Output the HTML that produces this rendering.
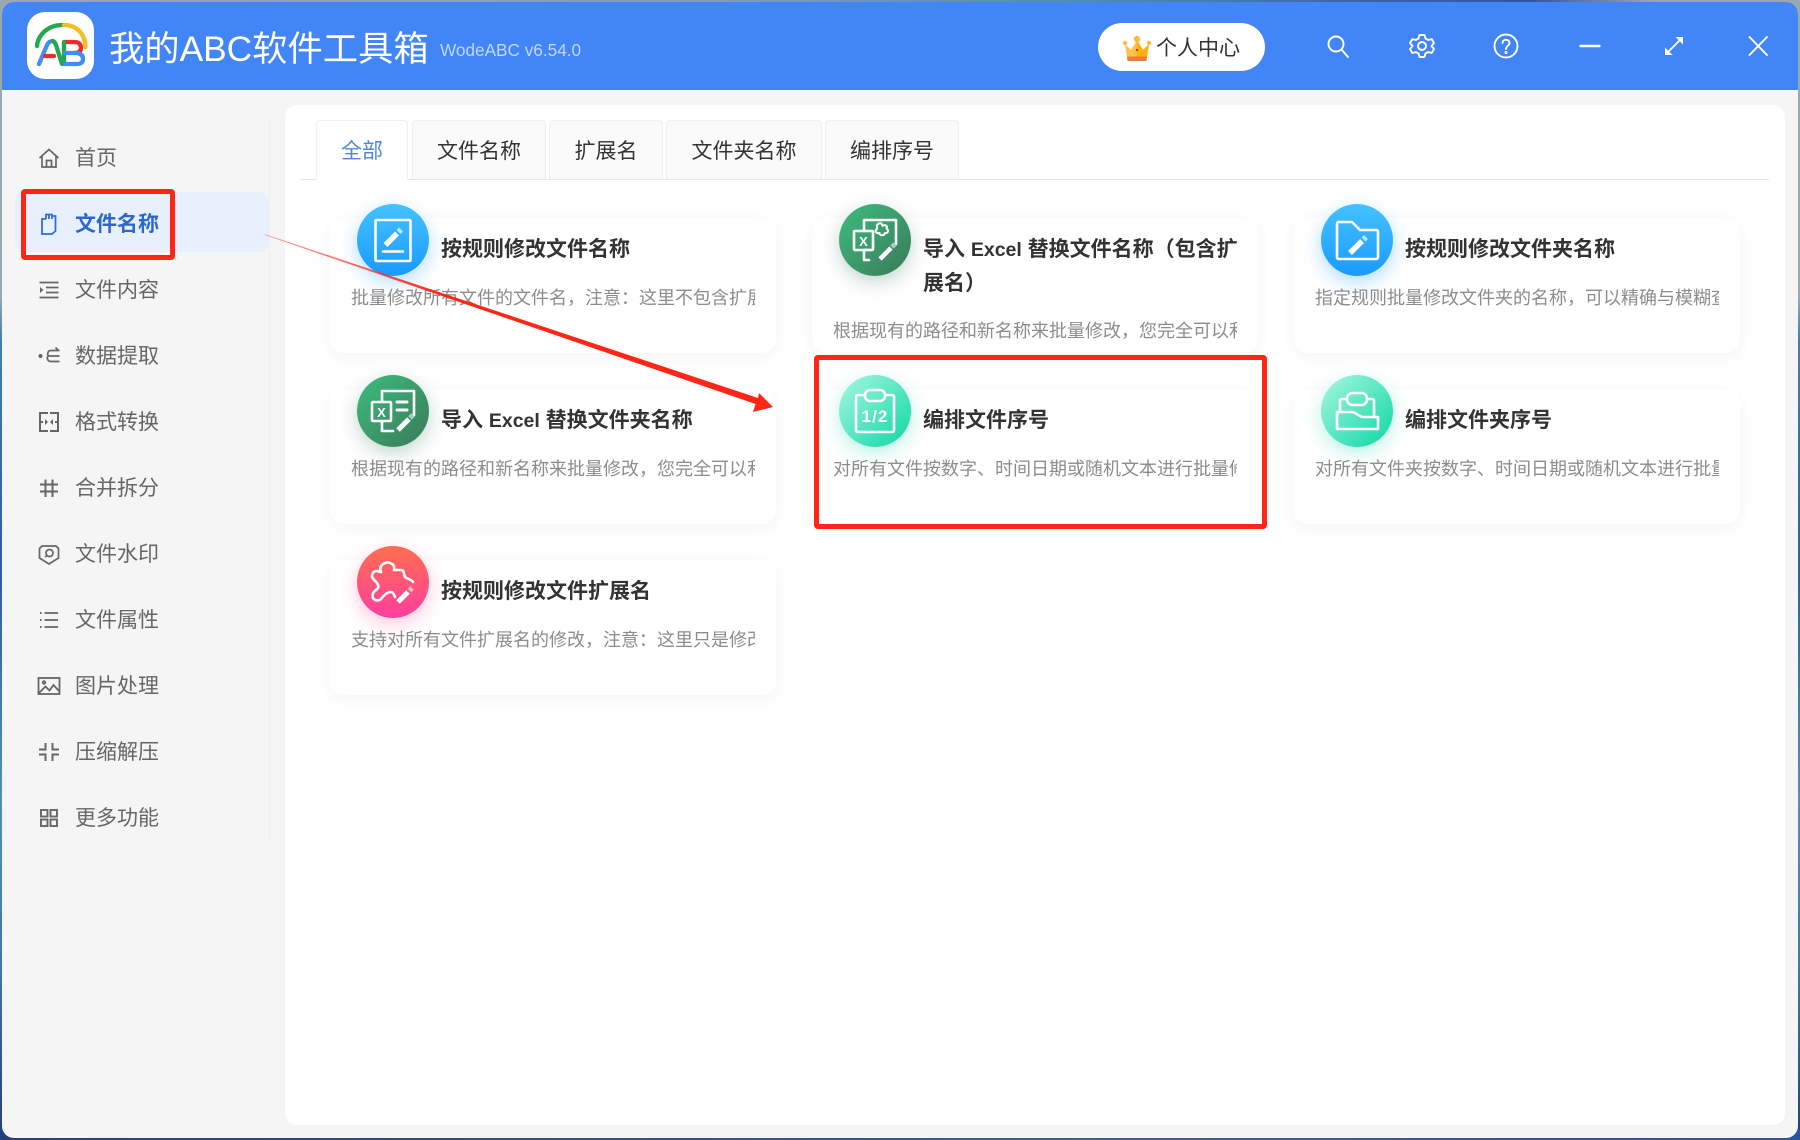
<!DOCTYPE html>
<html lang="zh-CN">
<head>
<meta charset="utf-8">
<title>我的ABC软件工具箱</title>
<style>
*{box-sizing:border-box;margin:0;padding:0}
html,body{width:1800px;height:1140px;overflow:hidden}
body{position:relative;background:linear-gradient(180deg,#9aa7b0 0,#9aa7b0 26%,#3d7fb5 30%,#2c5fa8 50%,#4d92b8 70%,#3d78b0 85%,#24407c 100%);font-family:"Liberation Sans","Noto Sans CJK SC",sans-serif}
.topbg{position:absolute;left:0;top:0;width:1800px;height:4px;background:linear-gradient(90deg,#9aa7b0 0,#7f9fb0 40%,#4d8fb0 60%,#3a66b0 75%,#2f55a8 85%,#9aa7b0 92%)}
.botbg{position:absolute;left:0;top:1130px;width:1800px;height:10px;background:linear-gradient(90deg,#24407c 0,#3a5f90 60%,#2a55a0 100%)}
#win{position:absolute;left:2px;top:2px;width:1796px;height:1136px;background:#f5f5f5;border-radius:12px;overflow:hidden}
#hd{position:absolute;left:0;top:0;width:1796px;height:88px;background:#4285f7}
.a{position:absolute;white-space:nowrap}
.abs{position:absolute}
#panel{position:absolute;left:285px;top:105px;width:1500px;height:1020px;background:#fff;border-radius:12px}
#divider{position:absolute;left:269px;top:120px;width:1px;height:725px;background:#efefef}
#act{position:absolute;left:15px;top:192px;width:254px;height:60px;background:#e8f0fd;border-radius:10px}
.nav{position:absolute;left:75px;font-size:21px;line-height:30px;color:#666;white-space:nowrap}
.ni{position:absolute;left:37px;width:24px;height:24px;fill:none;stroke:#666;stroke-width:1.7}
.tab{position:absolute;top:120px;height:59px;background:#fafafa;border:1px solid #f0f0f0;border-bottom:none;border-radius:4px 4px 0 0;font-size:21px;line-height:62px;text-align:center;color:#333}
.card{position:absolute;width:446px;height:135px;background:#fff;border-radius:14px;box-shadow:0 4px 18px rgba(0,0,0,.045)}
.circ{position:absolute;width:72px;height:72px;border-radius:50%}
.circ svg{position:absolute;left:0;top:0;width:72px;height:72px;fill:none;stroke:#fff;stroke-width:2.6;stroke-linecap:round;stroke-linejoin:round}
.ttl{position:absolute;font-size:21px;font-weight:700;line-height:33px;color:#333;white-space:nowrap}
.ttl span{font-size:19.500px}
.dsc{position:absolute;width:404px;height:28px;overflow:hidden;font-size:18px;line-height:28px;color:#8c8c8c;white-space:nowrap}
.blue{background:linear-gradient(180deg,#45c2ff,#1a9aff);box-shadow:0 6px 18px rgba(30,155,255,.35)}
.green{background:linear-gradient(135deg,#3cbd7d,#3b7a5a);box-shadow:0 6px 18px rgba(50,120,90,.3)}
.teal{background:linear-gradient(135deg,#a8f7e2,#0cd7a3);box-shadow:0 6px 18px rgba(20,215,165,.3)}
.pink{background:linear-gradient(180deg,#ff6e4e,#ff3ea0);box-shadow:0 6px 18px rgba(255,70,140,.3)}
.hi{position:absolute;top:32px;width:28px;height:28px;fill:none;stroke:#fff;stroke-width:1.9;stroke-linecap:round;stroke-linejoin:round}
.rb{position:absolute;border:5px solid #ff2618;border-radius:4px}
</style>
</head>
<body>
<div class="topbg"></div>
<div class="botbg"></div>
<div id="win">
  <div id="hd"></div>
</div>

<!-- logo -->
<svg class="abs" style="left:27px;top:12px" width="67" height="67" viewBox="0 0 67 67" fill="none" stroke-width="4.300" stroke-linecap="round">
  <rect width="67" height="67" rx="18" fill="#fff" stroke="none"/>
  <path d="M10 34C11 22 22 13 35 13" stroke="#22a84f"/>
  <path d="M37 13C50 13 58 22 58.500 35" stroke="#f5bd1d"/>
  <path d="M12 52L20 33Q22 29 26 29" stroke="#3f8ef0"/>
  <path d="M26 29Q28 30 29 33L35 52" stroke="#22a84f"/>
  <path d="M18 44H27" stroke="#ee2a2a"/>
  <path d="M38 30H47Q54 30 54 36Q54 41 47 41" stroke="#ee2a2a"/>
  <path d="M37 30V52" stroke="#22a84f"/>
  <path d="M38 41H50Q56 42 56 47Q56 52 50 52H38" stroke="#3f8ef0"/>
</svg>
<div class="a" style="left:109px;top:27px;font-size:35.300px;line-height:46px;color:#fff">我的ABC软件工具箱</div>
<div class="a" style="left:440px;top:37px;font-size:17.200px;line-height:26px;color:#c3d7fb">WodeABC v6.54.0</div>

<!-- user button -->
<div class="abs" style="left:1098px;top:23px;width:167px;height:48px;border-radius:24px;background:#fff"></div>
<svg class="abs" style="left:1122px;top:34px" width="30" height="28" viewBox="0 0 30 28">
  <path d="M3 10L9 16L15 6L21 16L27 10L25 23H5Z" fill="#ffc24a"/>
  <path d="M15 6L21 16L27 10L25 23H15Z" fill="#ffb000"/>
  <circle cx="15" cy="5" r="3.200" fill="#fdbb46"/><circle cx="3" cy="9" r="2.200" fill="#fdbb46"/><circle cx="27" cy="9" r="2.200" fill="#fdbb46"/>
  <path d="M5 22.500H25L24.500 27H5.500Z" fill="#ee7b3a"/>
  <circle cx="15" cy="16" r="1.200" fill="#d4382c"/>
</svg>
<div class="a" style="left:1156px;top:34px;font-size:21px;line-height:30px;color:#333">个人中心</div>

<!-- window icons -->
<svg class="hi" style="left:1324px" viewBox="0 0 28 28"><circle cx="12" cy="12" r="7.500"/><path d="M17.500 17.500L24 25"/></svg>
<svg class="hi" style="left:1408px" viewBox="0 0 28 28"><path d="M11.500 3H16.500L17.500 6.500L20.200 8L23.700 7.100L26 11L23.500 14L26 17L23.700 21L20.200 20L17.500 21.500L16.500 25H11.500L10.500 21.500L7.800 20L4.300 21L2 17L4.500 14L2 11L4.300 7.100L7.800 8L10.500 6.500Z"/><circle cx="14" cy="14" r="4"/></svg>
<svg class="hi" style="left:1492px" viewBox="0 0 28 28"><circle cx="14" cy="14" r="11.500"/><path d="M10.500 11C10.500 6.800 17.500 6.800 17.500 11C17.500 13.800 14 13.800 14 17"/><circle cx="14" cy="20.500" r=".6"/></svg>
<svg class="hi" style="left:1576px" viewBox="0 0 28 28"><path d="M4.500 14H23.500" stroke-width="2.400"/></svg>
<svg class="hi" style="left:1660px" viewBox="0 0 28 28"><path d="M8 20L20 8"/><path d="M15.500 5H23V12.500L15.500 5Z" fill="#fff" stroke="none"/><path d="M12.500 23H5V15.500L12.500 23Z" fill="#fff" stroke="none"/></svg>
<svg class="hi" style="left:1744px" viewBox="0 0 28 28"><path d="M5.500 5L23 23M23 5L5.500 23"/></svg>

<!-- sidebar -->
<div id="divider"></div>
<div id="act"></div>

<svg class="ni" style="top:146px" viewBox="0 0 24 24"><path d="M2.500 12L12 3.500L21.500 12M5 10V21H19V10M9.500 21V14.500H14.500V21"/></svg>
<div class="nav" style="top:144px">首页</div>

<svg class="ni" style="top:212px;stroke:#2f6fd6;stroke-width:1.8" viewBox="0 0 24 24"><path d="M9 7H5V22H15L18.500 19V4H16"/><path d="M9 7V2.500H15V7"/><path d="M12 7V2.500"/></svg>
<div class="nav" style="top:210px;color:#2c67cd;font-weight:700">文件名称</div>

<svg class="ni" style="top:278px" viewBox="0 0 24 24"><path d="M2.500 4.500H21.500M9 9.500H21.500M9 14.500H21.500M2.500 19.500H21.500"/><path d="M3 9L6.500 12L3 15Z" fill="#666" stroke="none"/></svg>
<div class="nav" style="top:276px">文件内容</div>

<svg class="ni" style="top:344px" viewBox="0 0 24 24"><circle cx="3.500" cy="12" r="2" fill="#666" stroke="none"/><path d="M12 12H22.500M22.500 6.500H14C10 6.500 10 12 12 12C9 12 10 17.500 14 17.500H22.500M18.500 3.500L21.500 6.500"/></svg>
<div class="nav" style="top:342px">数据提取</div>

<svg class="ni" style="top:410px;stroke-width:2" viewBox="0 0 24 24"><path d="M11 3H3V21H11M13 3H21V21H13M3 12H6M21 12H18"/><path d="M11 12L8 9V15ZM13 12L16 9V15Z" fill="#666" stroke="none"/></svg>
<div class="nav" style="top:408px">格式转换</div>

<svg class="ni" style="top:476px;stroke-width:2" viewBox="0 0 24 24"><path d="M3 8.500H21M3 15.500H21M8.500 3.500V21M15.500 3.500V21"/></svg>
<div class="nav" style="top:474px">合并拆分</div>

<svg class="ni" style="top:542px" viewBox="0 0 24 24"><path d="M5 4H19L21.500 6.500V16L12 22L2.500 16V6.500Z"/><circle cx="12.500" cy="11" r="3.500"/><path d="M10 13.500L8 15"/></svg>
<div class="nav" style="top:540px">文件水印</div>

<svg class="ni" style="top:608px" viewBox="0 0 24 24"><path d="M7.500 5H21M7.500 12H21M7.500 19H21"/><path d="M3 5H4.500M3 12H4.500M3 19H4.500" stroke-width="2"/></svg>
<div class="nav" style="top:606px">文件属性</div>

<svg class="ni" style="top:674px;stroke-width:1.8" viewBox="0 0 24 24"><rect x="1.500" y="4" width="21" height="16"/><circle cx="7" cy="8.500" r="1.300"/><path d="M2 19L8.500 12.500L12.500 16.500L16.500 11L22 17"/></svg>
<div class="nav" style="top:672px">图片处理</div>

<svg class="ni" style="top:740px;stroke-width:2" viewBox="0 0 24 24"><path d="M2 9.500H8.500V3M22 9.500H15.500V3M2 14.500H8.500V21M22 14.500H15.500V21"/></svg>
<div class="nav" style="top:738px">压缩解压</div>

<svg class="ni" style="top:806px;stroke-width:1.9" viewBox="0 0 24 24"><rect x="4" y="4" width="6.500" height="6.500"/><rect x="13.500" y="4" width="6.500" height="6.500"/><rect x="4" y="13.500" width="6.500" height="6.500"/><rect x="13.500" y="13.500" width="6.500" height="6.500"/></svg>
<div class="nav" style="top:804px">更多功能</div>

<!-- main panel -->
<div id="panel"></div>
<div class="abs" style="left:300px;top:179px;width:1469px;height:1px;background:#e8e8e8"></div>
<div class="tab" style="left:316px;width:92px;height:60px;background:#fff;color:#4f86dc">全部</div>
<div class="tab" style="left:412px;width:134px">文件名称</div>
<div class="tab" style="left:549px;width:114px">扩展名</div>
<div class="tab" style="left:666px;width:156px">文件夹名称</div>
<div class="tab" style="left:825px;width:134px">编排序号</div>

<!-- cards -->
<div class="card" style="left:330px;top:218px"></div>
<div class="card" style="left:812px;top:218px"></div>
<div class="card" style="left:1294px;top:218px"></div>
<div class="card" style="left:330px;top:389px"></div>
<div class="card" style="left:812px;top:389px"></div>
<div class="card" style="left:1294px;top:389px"></div>
<div class="card" style="left:330px;top:560px"></div>

<!-- row 1 -->
<div class="circ blue" style="left:357px;top:204px"><svg viewBox="0 0 72 72"><rect x="18.500" y="16" width="35" height="41" rx="1"/><path d="M28.500 41L40 29.500" stroke-width="5.500" stroke-linecap="butt"/><path d="M41.500 28L44 25.500" stroke="#bfe6ff" stroke-width="5.500" stroke-linecap="butt"/><path d="M26 47.500H46"/></svg></div>
<div class="ttl" style="left:441px;top:233px">按规则修改文件名称</div>
<div class="dsc" style="left:351px;top:284px">批量修改所有文件的文件名，注意：这里不包含扩展名的修改</div>

<div class="circ green" style="left:839px;top:204px"><svg viewBox="0 0 72 72"><path d="M25 26V16H57V40M30 56H25V46H31"/><rect x="15" y="27" width="19" height="19" rx="1"/><text x="24.500" y="42" font-family="Liberation Sans" font-size="13" font-weight="700" fill="#fff" stroke="none" text-anchor="middle">X</text><path d="M38 21C41 18 43 19 43.500 22C46 20 49 22 47.500 24.500C50 26 49 30 46 29C45 32 41 32 40.500 29C37 30 35 26 38 25Z" stroke-width="2"/><path d="M41 55L52 44" stroke-width="4.500" stroke-linecap="butt"/><path d="M53 43L56 40" stroke="#9ed4b8" stroke-width="4.500" stroke-linecap="butt"/></svg></div>
<div class="ttl" style="left:923px;top:233px">导入 <span>Excel</span> 替换文件名称（包含扩<br>展名）</div>
<div class="dsc" style="left:833px;top:317px">根据现有的路径和新名称来批量修改，您完全可以利用</div>

<div class="circ blue" style="left:1321px;top:204px"><svg viewBox="0 0 72 72"><path d="M16 20Q16 18 18 18H31L39 26H55Q57 26 57 28V53Q57 55 55 55H18Q16 55 16 53Z"/><path d="M29 49L41 37" stroke-width="5.500" stroke-linecap="butt"/><path d="M42.500 35.500L45 33" stroke="#bfe6ff" stroke-width="5.500" stroke-linecap="butt"/></svg></div>
<div class="ttl" style="left:1405px;top:233px">按规则修改文件夹名称</div>
<div class="dsc" style="left:1315px;top:284px">指定规则批量修改文件夹的名称，可以精确与模糊查找替换</div>

<!-- row 2 -->
<div class="circ green" style="left:357px;top:375px"><svg viewBox="0 0 72 72"><path d="M25 26V16H57V40M36 56H25V46"/><rect x="15" y="27" width="19" height="19" rx="1"/><text x="24.500" y="42" font-family="Liberation Sans" font-size="13" font-weight="700" fill="#fff" stroke="none" text-anchor="middle">X</text><path d="M40 27H50M40 35H50" stroke-width="3"/><path d="M41 55L52 44" stroke-width="5" stroke-linecap="butt"/><path d="M53 43L56 40" stroke="#9ed4b8" stroke-width="5" stroke-linecap="butt"/></svg></div>
<div class="ttl" style="left:441px;top:404px">导入 <span>Excel</span> 替换文件夹名称</div>
<div class="dsc" style="left:351px;top:455px">根据现有的路径和新名称来批量修改，您完全可以利用</div>

<div class="circ teal" style="left:839px;top:375px"><svg viewBox="0 0 72 72"><path d="M26 20H19Q17 20 17 22V55Q17 57 19 57H53Q55 57 55 55V22Q55 20 53 20H46"/><rect x="26" y="15" width="20" height="11" rx="5"/><text x="36" y="47" font-family="Liberation Sans" font-size="17" font-weight="700" letter-spacing="1" fill="#fff" stroke="none" text-anchor="middle">1/2</text></svg></div>
<div class="ttl" style="left:923px;top:404px">编排文件序号</div>
<div class="dsc" style="left:833px;top:455px">对所有文件按数字、时间日期或随机文本进行批量修改</div>

<div class="circ teal" style="left:1321px;top:375px"><svg viewBox="0 0 72 72"><rect x="26" y="18" width="20" height="12" rx="5.500"/><path d="M26 24H21Q19 24 19 26V37M46 24H51Q53 24 53 26V42"/><path d="M16 37H30C36 37 37 42 43 42H57V54H16Z"/></svg></div>
<div class="ttl" style="left:1405px;top:404px">编排文件夹序号</div>
<div class="dsc" style="left:1315px;top:455px">对所有文件夹按数字、时间日期或随机文本进行批量修改</div>

<!-- row 3 -->
<div class="circ pink" style="left:357px;top:546px"><svg viewBox="0 0 72 72"><path d="M24 26C21 19 29 15 33 17C36 18 38 20 37 24L44 24C46 24 47 26 47 28L48 31C50 33 54 33 56 36"/><path d="M24 26L20 25C17 25 15 27 15 30C15 33 17 33 20 37C22 40 22 42 19 44C16 46 15 49 16 52C18 55 22 55 24 53C27 49 30 46 34 46C36 46 37 48 38 51"/><path d="M41 56L51 46" stroke-width="5" stroke-linecap="butt"/><path d="M52.500 44.500L55 42" stroke="#ffc0cc" stroke-width="5" stroke-linecap="butt"/></svg></div>
<div class="ttl" style="left:441px;top:575px">按规则修改文件扩展名</div>
<div class="dsc" style="left:351px;top:626px">支持对所有文件扩展名的修改，注意：这里只是修改扩展名</div>

<!-- annotations -->
<div class="rb" style="left:21px;top:189px;width:154px;height:71px"></div>
<div class="rb" style="left:814px;top:355px;width:453px;height:174px"></div>
<svg class="abs" style="left:0;top:0" width="1800" height="1140">
  <defs><linearGradient id="ar" gradientUnits="userSpaceOnUse" x1="265" y1="234" x2="450" y2="300"><stop offset="0" stop-color="#ff2618" stop-opacity=".45"/><stop offset="1" stop-color="#ff2618"/></linearGradient></defs>
  <path d="M265 234.200L758 398L759 393L773 407L753 412L755.500 404L265 235Z" fill="url(#ar)"/>
</svg>
</body>
</html>
